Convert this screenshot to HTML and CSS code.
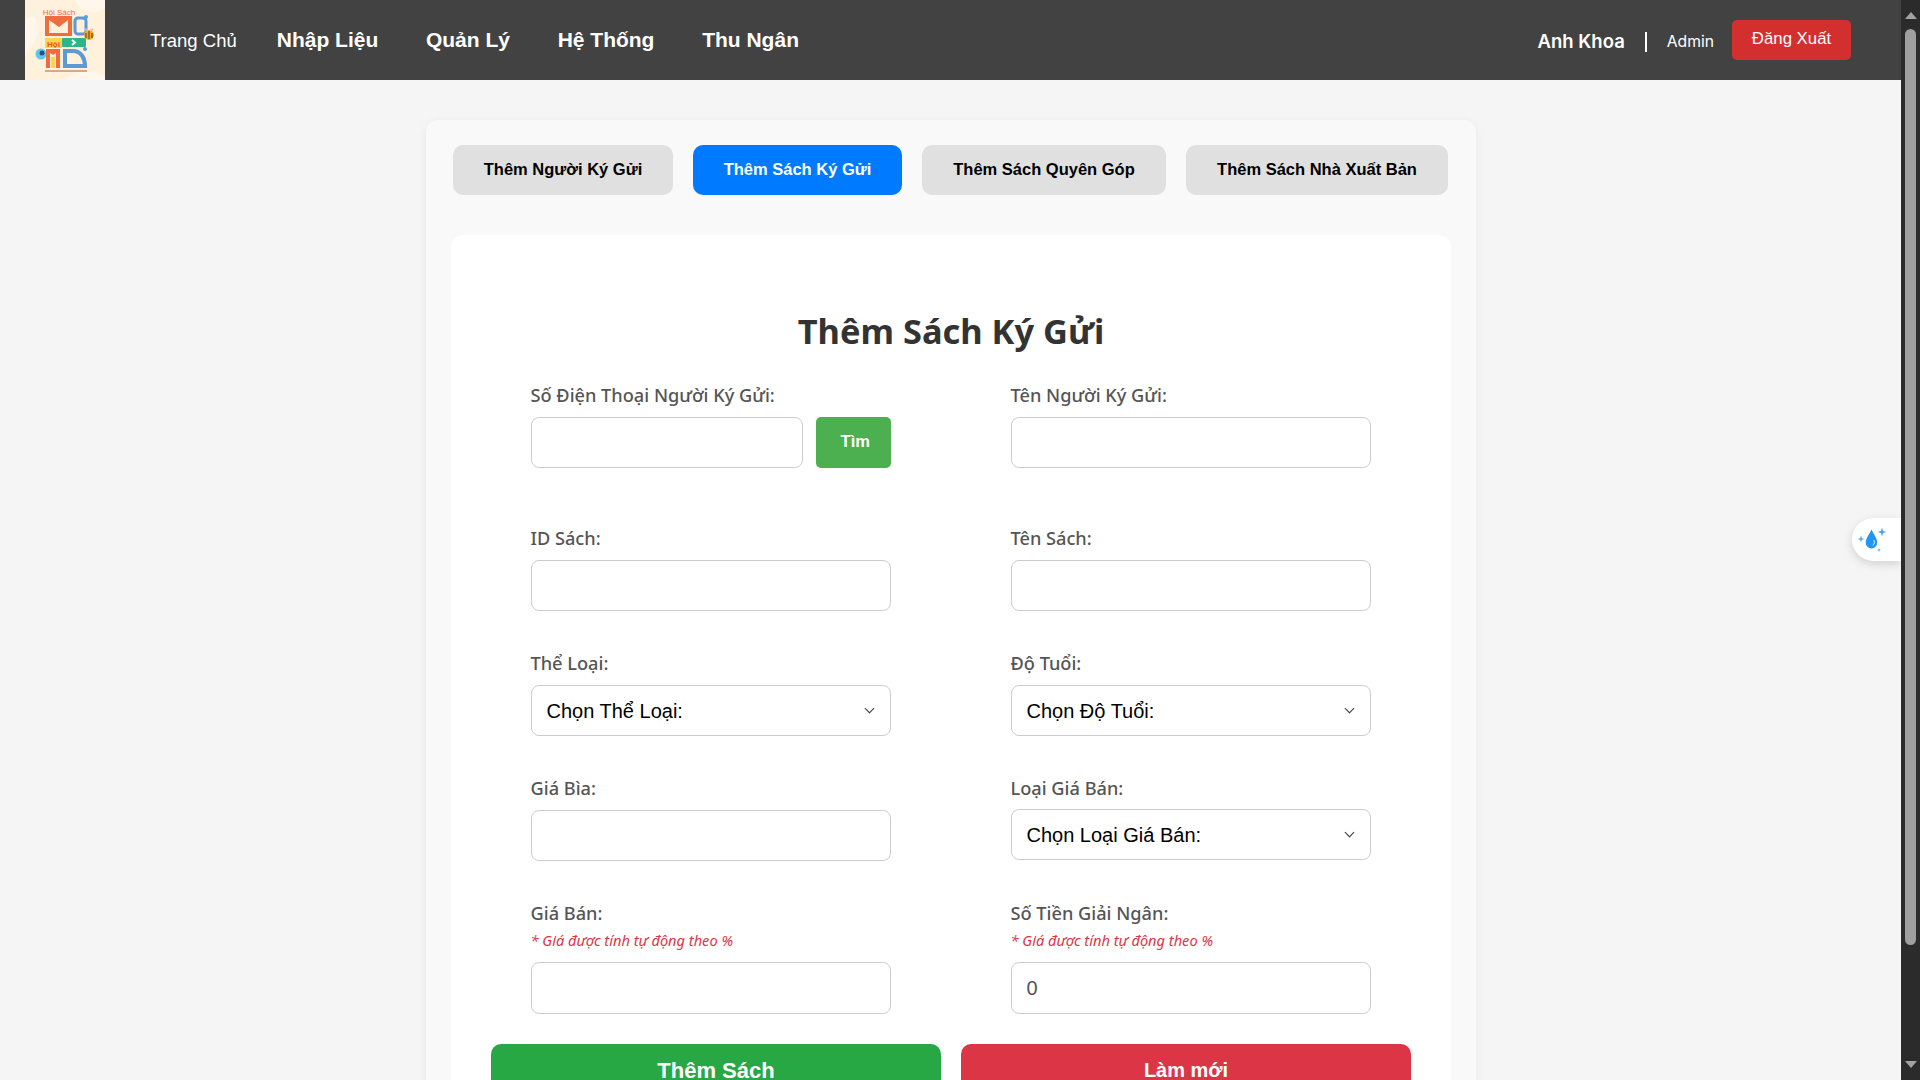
FILE: index.html
```html
<!DOCTYPE html>
<html lang="vi">
<head>
<meta charset="utf-8">
<title>Thêm Sách Ký Gửi</title>
<link rel="stylesheet" href="styles.css">
</head>
<body>
<div class="app">
  <div class="page">
    <header class="navbar">
      <div class="logo">
        <svg viewBox="0 0 80 80" width="80" height="80">
          <rect width="80" height="80" fill="#fff1dc"/>
          <path d="M0 20C14 8 18 30 8 44S0 60 0 60Z" fill="#fff7ec"/>
          <path d="M50 0C56 14 72 14 80 8V0Z" fill="#fff7ec"/>
          <path d="M40 80C48 70 66 68 80 76V80Z" fill="#fff7ec"/>
          <text x="34" y="15" class="logo-title">Hội Sách</text>
          <path d="M20 16H47V36H20Z" fill="#ef6c3e"/>
          <path d="M24 20L34 27L43 20V33H24Z" fill="#fff1dc"/>
          <rect x="50" y="18" width="11" height="16" rx="3" fill="none" stroke="#5a9bd5" stroke-width="3"/>
          <circle cx="61" cy="17" r="2" fill="#5a9bd5"/>
          <rect x="20" y="38" width="17" height="10" fill="#ffd54a"/>
          <text x="28.500" y="46.500" class="logo-hoi">Hội</text>
          <rect x="37" y="38" width="24" height="9" rx="1" fill="#2fb48a"/>
          <path d="M47 40L50 42.500L47 45" fill="none" stroke="#fff" stroke-width="2"/>
          <circle cx="64" cy="35" r="5" fill="#f6a623"/>
          <path d="M61 33V38M64 31V39M67 33V38" stroke="#5a3a12" stroke-width="1"/>
          <path d="M60 29L63 31M68 29L65 31" stroke="#f3b8a0" stroke-width="2"/>
          <circle cx="16" cy="54" r="5.500" fill="#5fc7e8"/>
          <circle cx="17" cy="53" r="2.500" fill="#23508f"/>
          <path d="M21 49H35V68H21Z" fill="#ef6c3e"/>
          <path d="M25 53L28 55L31 53V68H25Z" fill="#fff1dc"/>
          <rect x="26" y="57" width="4" height="11" fill="#ffd54a"/>
          <path d="M40 66V51H48C56 51 60 58 60 66Z" fill="none" stroke="#5a9bd5" stroke-width="4"/>
          <circle cx="60" cy="49" r="2" fill="#5a9bd5"/>
          <rect x="20" y="70" width="42" height="2" fill="#d9a88a"/>
        </svg>
      </div>
      <nav class="nav-links">
        <a class="nav-home">Trang Chủ</a>
        <a class="nav-item">Nhập Liệu</a>
        <a class="nav-item">Quản Lý</a>
        <a class="nav-item">Hệ Thống</a>
        <a class="nav-item">Thu Ngân</a>
      </nav>
      <div class="user-box">
        <span class="user-name">Anh Khoa</span>
        <span class="user-sep"></span>
        <span class="user-role">Admin</span>
        <button class="logout">Đăng Xuất</button>
      </div>
    </header>

    <main class="container">
      <div class="tabs">
        <button class="tab tab-1">Thêm Người Ký Gửi</button>
        <button class="tab tab-2 active">Thêm Sách Ký Gửi</button>
        <button class="tab tab-3">Thêm Sách Quyên Góp</button>
        <button class="tab tab-4">Thêm Sách Nhà Xuất Bản</button>
      </div>
      <section class="card">
        <h1 class="title">Thêm Sách Ký Gửi</h1>
        <form class="form-grid">
          <div class="field field-search">
            <label>Số Điện Thoại Người Ký Gửi:</label>
            <div class="search-row">
              <input type="text">
              <button type="button" class="find">Tìm</button>
            </div>
          </div>
          <div class="field field-search">
            <label>Tên Người Ký Gửi:</label>
            <input type="text">
          </div>
          <div class="field"><label>ID Sách:</label><input type="text"></div>
          <div class="field"><label>Tên Sách:</label><input type="text"></div>
          <div class="field"><label>Thể Loại:</label><div class="select-wrap"><select><option>Chọn Thể Loại:</option></select></div></div>
          <div class="field"><label>Độ Tuổi:</label><div class="select-wrap"><select><option>Chọn Độ Tuổi:</option></select></div></div>
          <div class="field"><label>Giá Bìa:</label><input type="text"></div>
          <div class="field"><label>Loại Giá Bán:</label><div class="select-wrap select-up"><select><option>Chọn Loại Giá Bán:</option></select></div></div>
          <div class="field field-hinted">
            <label>Giá Bán:</label>
            <small class="hint">* Giá được tính tự động theo %</small>
            <input type="text">
          </div>
          <div class="field field-hinted">
            <label>Số Tiền Giải Ngân:</label>
            <small class="hint">* Giá được tính tự động theo %</small>
            <input type="text" value="0">
          </div>
        </form>
        <div class="actions">
          <button class="action add">Thêm Sách</button>
          <button class="action reset">Làm mới</button>
        </div>
      </section>
    </main>

    <div class="float-widget">
      <svg viewBox="0 0 40 30" width="40" height="30">
        <path d="M15.500 4.500C13 10 9.800 13 9.800 17.800A5.700 5.700 0 0 0 21.200 17.800C21.200 13 18 10 15.500 4.500Z" fill="#2196f3"/>
        <path d="M18 15Q19.500 18 17 20.500" stroke="#cfe9ff" stroke-width="1" fill="none"/>
        <path d="M26 2.500L27 6L30.500 7L27 8L26 11.500L25 8L21.500 7L25 6Z" fill="#42a5f5"/>
        <path d="M5 10.500L5.800 13.200L8.500 14L5.800 14.800L5 17.500L4.200 14.800L1.500 14L4.200 13.200Z" fill="#42a5f5"/>
        <path d="M23 23L23.500 24.500L25 25L23.500 25.500L23 27L22.500 25.500L21 25L22.500 24.500Z" fill="#42a5f5"/>
      </svg>
    </div>
  </div>

  <aside class="scrollbar" aria-hidden="true">
    <span class="arrow-up"></span>
    <span class="thumb"></span>
    <span class="arrow-down"></span>
  </aside>
</div>
</body>
</html>
```

FILE: styles.css
```css
* { box-sizing: border-box; }
html, body { margin: 0; height: 100%; overflow: hidden; }
body { font-family: "Liberation Sans", Arial, sans-serif; background: #f5f5f5; color: #333; }

.app { display: flex; height: 1080px; }
.page { position: relative; flex: 1; min-width: 0; height: 1080px; overflow: hidden; background: #f5f5f5; }

/* scrollbar */
.scrollbar { width: 19px; flex: none; background: #2b2b2b; display: flex; flex-direction: column; align-items: center; }
.arrow-up { width: 0; height: 0; margin-top: 12px; border-left: 6.500px solid transparent; border-right: 6.500px solid transparent; border-bottom: 7px solid #a3a3a3; }
.thumb { width: 11px; height: 916px; margin-top: 10px; background: #9f9f9f; border-radius: 6px; }
.arrow-down { width: 0; height: 0; margin-top: 116px; border-left: 6.500px solid transparent; border-right: 6.500px solid transparent; border-top: 7px solid #a3a3a3; }

/* navbar */
.navbar { height: 80px; background: #424242; display: flex; align-items: center; padding-left: 25px; padding-right: 50px; color: #fff; }
.logo { width: 80px; height: 80px; flex: none; }
.logo svg { display: block; }
.logo-title { font-family: "Liberation Sans", sans-serif; font-size: 8px; fill: #ef6c3e; text-anchor: middle; }
.logo-hoi { font-family: "Liberation Sans", sans-serif; font-size: 8px; font-weight: 700; fill: #e8502a; text-anchor: middle; }

.nav-links { display: flex; align-items: center; margin-left: 45px; }
.nav-home { font-size: 18.500px; font-weight: 400; margin-top: 2px; margin-right: 40px; }
.nav-item { font-size: 21px; font-weight: 700; margin-right: 47.700px; margin-top: -1px; }

.user-box { margin-left: auto; display: flex; align-items: center; }
.user-name { font-family: Inter, sans-serif; font-size: 18.500px; font-weight: 600; margin-top: 2px; }
.user-sep { width: 2px; height: 20px; background: #fff; margin: 3px 20px 0 20px; }
.user-role { font-family: Inter, sans-serif; font-size: 15.700px; margin-top: 2px; margin-right: 18px; }
.logout { width: 119px; height: 40px; background: #d32f2f; color: #fff; border: 0; border-radius: 5px; font-family: "Liberation Sans", sans-serif; font-size: 16.800px; padding: 0 0 2px; }

/* container */
.container { width: 1050px; margin: 40px 0 0 426px; padding: 25px 25px 40px; background: #f9f9f9; border-radius: 12px; box-shadow: 0 2px 10px rgba(0,0,0,.06); height: 1200px; }
.tabs { display: flex; gap: 20px; margin-left: 2px; }
.tab { height: 50px; border: 0; border-radius: 10px; background: #e0e0e0; color: #000; font-family: "Liberation Sans", sans-serif; font-size: 16.500px; font-weight: 700; padding: 0 0 2px; }
.tab-1 { width: 220px; }
.tab-2 { width: 209px; }
.tab-3 { width: 244px; }
.tab-4 { width: 262px; }
.tab.active { background: #007bff; color: #fff; }

/* card */
.card { width: 1000px; margin-top: 40px; padding: 71px 40px 40px; background: #fff; border-radius: 12px; }
.title { margin: 0 0 27px; text-align: center; font-family: "Noto Sans", sans-serif; font-size: 34.400px; line-height: 50px; font-weight: 700; color: #333; }
.form-grid { display: grid; grid-template-columns: 360px 360px; column-gap: 120px; row-gap: 40px; padding-left: 39.500px; }
.field { display: flex; flex-direction: column; }
.field-search { margin-bottom: 18px; }
.field label { font-family: "Noto Sans", sans-serif; font-size: 18.200px; line-height: 24px; font-weight: 500; color: #555; margin-bottom: 10px; }
.hint { font-family: "Noto Sans", sans-serif; font-size: 14.600px; line-height: 20px; font-style: italic; color: #dc3545; margin: -5px 0 12px; }
.field input, .field select { width: 360px; height: 51px; padding: 0 15px; border: 1px solid #ccc; border-radius: 8px; background: #fff; font-family: "Liberation Sans", sans-serif; font-size: 20px; color: #000; }
.field-hinted input { height: 52px; }
.field input[value="0"] { color: #555; }
.field select { appearance: none; display: block; }
.select-wrap { position: relative; width: 360px; }
.select-wrap::after { content: ""; position: absolute; right: 18px; top: 20px; width: 6px; height: 6px; border-right: 1.500px solid #333; border-bottom: 1.500px solid #333; transform: rotate(45deg); pointer-events: none; }
.select-up { margin-top: -1px; margin-bottom: 1px; }
.search-row { display: flex; gap: 13.500px; }
.search-row input { width: 272px; }
.find { width: 75px; height: 51px; border: 0; border-radius: 5px; background: #4caf50; color: #fff; font-family: "Liberation Sans", sans-serif; font-size: 16.500px; font-weight: 700; padding: 0 0 2px 4px; }

.actions { display: flex; gap: 20px; margin-top: 30px; }
.action { width: 450px; height: 52px; border: 0; border-radius: 10px; color: #fff; font-family: "Liberation Sans", sans-serif; font-weight: 700; padding: 1px 0 0; }
.add { background: #28a745; font-size: 22px; }
.reset { background: #dc3545; font-size: 20px; }

/* floating widget */
.float-widget { position: absolute; left: 1852px; top: 518px; width: 49px; height: 43px; padding: 7px 0 0 4px; background: #fff; border-radius: 22px 0 0 22px; box-shadow: 0 3px 10px rgba(0,0,0,.15); }
.float-widget svg { display: block; }
```
